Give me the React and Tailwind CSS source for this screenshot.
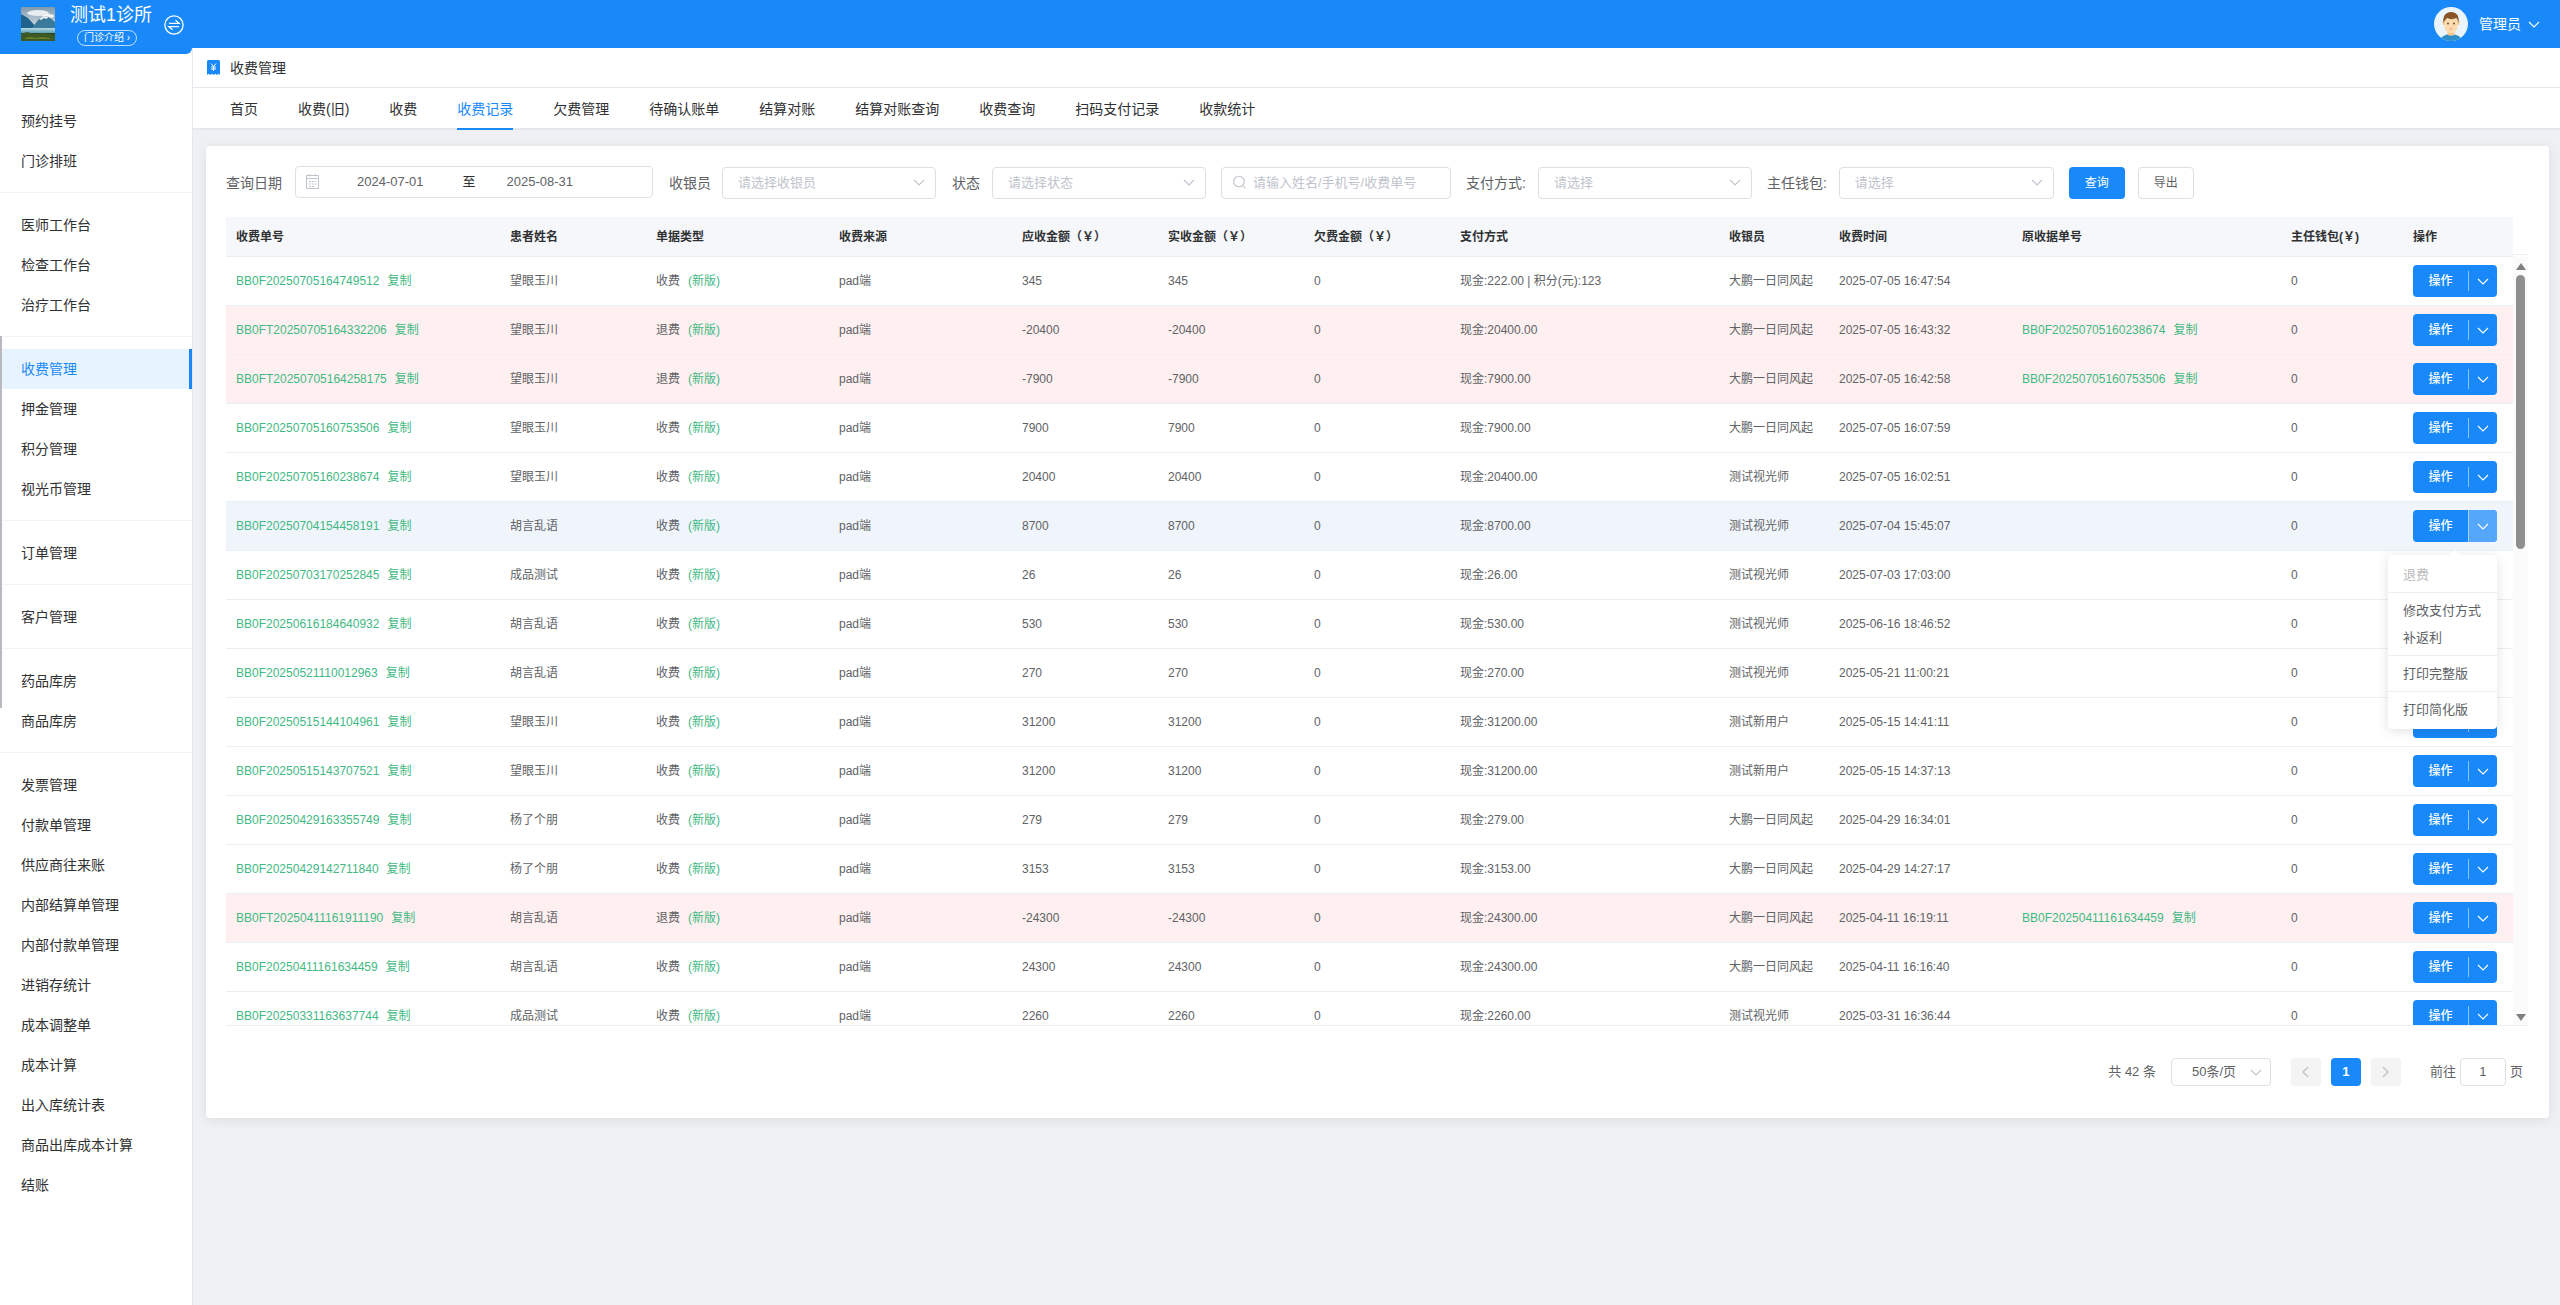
const FONT = "font-['Liberation_Sans','Noto_Sans_CJK_SC',sans-serif]";

const navSections = [
  ['首页', '预约挂号', '门诊排班'],
  ['医师工作台', '检查工作台', '治疗工作台'],
  ['收费管理', '押金管理', '积分管理', '视光币管理'],
  ['订单管理'],
  ['客户管理'],
  ['药品库房', '商品库房'],
  ['发票管理', '付款单管理', '供应商往来账', '内部结算单管理', '内部付款单管理', '进销存统计', '成本调整单', '成本计算', '出入库统计表', '商品出库成本计算', '结账'],
];

const tabs = ['首页', '收费(旧)', '收费', '收费记录', '欠费管理', '待确认账单', '结算对账', '结算对账查询', '收费查询', '扫码支付记录', '收款统计'];

const headers = ['收费单号', '患者姓名', '单据类型', '收费来源', '应收金额（￥）', '实收金额（￥）', '欠费金额（￥）', '支付方式', '收银员', '收费时间', '原收据单号', '主任钱包(￥)', '操作'];

const DP = '大鹏一日同风起';
const SG = '测试视光师';
const XY = '测试新用户';
const WY = '望眼玉川';
const HY = '胡言乱语';
const CP = '成品测试';
const YL = '杨了个朋';

const rows = [
  { id: 'BB0F20250705164749512', name: WY, type: '收费', amount: '345', pay: '现金:222.00 | 积分(元):123', cashier: DP, time: '2025-07-05 16:47:54' },
  { id: 'BB0FT20250705164332206', name: WY, type: '退费', amount: '-20400', pay: '现金:20400.00', cashier: DP, time: '2025-07-05 16:43:32', orig: 'BB0F20250705160238674' },
  { id: 'BB0FT20250705164258175', name: WY, type: '退费', amount: '-7900', pay: '现金:7900.00', cashier: DP, time: '2025-07-05 16:42:58', orig: 'BB0F20250705160753506' },
  { id: 'BB0F20250705160753506', name: WY, type: '收费', amount: '7900', pay: '现金:7900.00', cashier: DP, time: '2025-07-05 16:07:59' },
  { id: 'BB0F20250705160238674', name: WY, type: '收费', amount: '20400', pay: '现金:20400.00', cashier: SG, time: '2025-07-05 16:02:51' },
  { id: 'BB0F20250704154458191', name: HY, type: '收费', amount: '8700', pay: '现金:8700.00', cashier: SG, time: '2025-07-04 15:45:07', open: true },
  { id: 'BB0F20250703170252845', name: CP, type: '收费', amount: '26', pay: '现金:26.00', cashier: SG, time: '2025-07-03 17:03:00' },
  { id: 'BB0F20250616184640932', name: HY, type: '收费', amount: '530', pay: '现金:530.00', cashier: SG, time: '2025-06-16 18:46:52' },
  { id: 'BB0F20250521110012963', name: HY, type: '收费', amount: '270', pay: '现金:270.00', cashier: SG, time: '2025-05-21 11:00:21' },
  { id: 'BB0F20250515144104961', name: WY, type: '收费', amount: '31200', pay: '现金:31200.00', cashier: XY, time: '2025-05-15 14:41:11' },
  { id: 'BB0F20250515143707521', name: WY, type: '收费', amount: '31200', pay: '现金:31200.00', cashier: XY, time: '2025-05-15 14:37:13' },
  { id: 'BB0F20250429163355749', name: YL, type: '收费', amount: '279', pay: '现金:279.00', cashier: DP, time: '2025-04-29 16:34:01' },
  { id: 'BB0F20250429142711840', name: YL, type: '收费', amount: '3153', pay: '现金:3153.00', cashier: DP, time: '2025-04-29 14:27:17' },
  { id: 'BB0FT20250411161911190', name: HY, type: '退费', amount: '-24300', pay: '现金:24300.00', cashier: DP, time: '2025-04-11 16:19:11', orig: 'BB0F20250411161634459' },
  { id: 'BB0F20250411161634459', name: HY, type: '收费', amount: '24300', pay: '现金:24300.00', cashier: DP, time: '2025-04-11 16:16:40' },
  { id: 'BB0F20250331163637744', name: CP, type: '收费', amount: '2260', pay: '现金:2260.00', cashier: SG, time: '2025-03-31 16:36:44' },
];

const GRID = 'grid grid-cols-[274px_146px_183px_183px_146px_146px_146px_269px_110px_183px_269px_122px_110px]';

function Chevron({ className = 'text-[#c0c4cc]' }) {
  return (
    <svg width="12" height="7" viewBox="0 0 12 7" fill="none" className={className}>
      <path d="M1 1l5 5 5-5" stroke="currentColor" strokeWidth="1.1" />
    </svg>
  );
}

function Logo() {
  return (
    <svg width="34" height="34" viewBox="0 0 34 34" className="shrink-0">
      <defs>
        <linearGradient id="sky" x1="0" y1="0" x2="0" y2="1">
          <stop offset="0" stopColor="#7f99ad" />
          <stop offset="1" stopColor="#d5dfe5" />
        </linearGradient>
        <linearGradient id="lake" x1="0" y1="0" x2="0" y2="1">
          <stop offset="0" stopColor="#b5dce5" />
          <stop offset="1" stopColor="#4b93a8" />
        </linearGradient>
      </defs>
      <rect width="34" height="21" fill="url(#sky)" />
      <ellipse cx="17" cy="6" rx="11" ry="3" fill="#e6ecef" />
      <ellipse cx="27" cy="9" rx="6" ry="2" fill="#f2f5f6" />
      <path d="M0 7l7 4 10 11H0z" fill="#1f628c" />
      <path d="M10 22l8-10 5-3 5 1 6 5v7z" fill="#3a7a9c" />
      <path d="M18 12l5-3 5 1-3 2-2-1-3 2z" fill="#eef2f5" />
      <rect y="21" width="34" height="6" fill="url(#lake)" />
      <rect y="26" width="34" height="8" fill="#2d4a22" />
      <path d="M0 27l6-2 7 2 8-1 13 2v6H0z" fill="#3c5a26" />
      <path d="M4 31l5-1 6 1 6-1 8 1v1H4z" fill="#6c7f2c" />
    </svg>
  );
}

function Avatar() {
  return (
    <svg width="34" height="34" viewBox="0 0 34 34" className="shrink-0">
      <clipPath id="avatarClip"><circle cx="17" cy="17" r="17" /></clipPath>
      <g clipPath="url(#avatarClip)">
        <rect width="34" height="34" fill="#eaf5fb" />
        <path d="M6 34c1-5 6-7 11-7s10 2 11 7z" fill="#2f8fc9" />
        <path d="M13.5 23h7v4.5c-1 1.6-6 1.6-7 0z" fill="#f6c88f" />
        <ellipse cx="9.8" cy="16" rx="1.4" ry="2.2" fill="#f6c88f" />
        <ellipse cx="24.2" cy="16" rx="1.4" ry="2.2" fill="#f6c88f" />
        <path d="M10.5 12h13v7c0 4-3 7-6.500 7s-6.500-3-6.500-7z" fill="#fcdcae" />
        <path d="M9.500 16c-1-6 1.500-11 7.500-11 6.500 0 8.500 5 7.500 11-.6-2-1-3.500-2-5-3 1.500-7 1.500-9.500 0-1.500 1.500-2.500 3-3.500 5z" fill="#8a5424" />
        <circle cx="14" cy="16.500" r=".9" fill="#5a3a1c" />
        <circle cx="20" cy="16.500" r=".9" fill="#5a3a1c" />
        <path d="M15.500 22h3" stroke="#d98e6a" strokeWidth=".8" />
      </g>
    </svg>
  );
}

function SwitchIcon() {
  return (
    <svg width="20" height="20" viewBox="0 0 20 20" fill="none" stroke="#fff" className="shrink-0">
      <circle cx="10" cy="10" r="9.100" strokeWidth="1.300" />
      <path d="M5 8.300h10L11.500 5.300" strokeWidth="1.300" />
      <path d="M15 11.700H5l3.500 3" strokeWidth="1.300" />
    </svg>
  );
}

function ReceiptIcon() {
  return (
    <svg width="13" height="15" viewBox="0 0 13 15" className="shrink-0">
      <path d="M1.500 0h10A1.500 1.500 0 0113 1.500V15l-1.600-1.200L9.800 15l-1.600-1.200L6.500 15l-1.700-1.200L3.200 15l-1.600-1.200L0 15V1.500A1.500 1.500 0 011.500 0z" fill="#1989fa" />
      <path d="M4 3.500l2.500 3 2.500-3M6.500 6.500v4.500M4 7h5M4 9h5" stroke="#fff" strokeWidth="1" fill="none" />
    </svg>
  );
}

function CalendarIcon() {
  return (
    <svg width="13" height="15" viewBox="0 0 13 15" fill="none" stroke="#c0c4cc" className="shrink-0">
      <rect x=".5" y="1.500" width="12" height="13" />
      <path d="M.5 4.500h12M3.500 0v2.500M9.500 0v2.500" />
      <path d="M3 7.500h2M6 7.500h2M9 7.500h1.500M3 10h2M6 10h2M9 10h1.500M3 12.500h2M6 12.500h2" strokeWidth="1" />
    </svg>
  );
}

function SearchIcon() {
  return (
    <svg width="13" height="15" viewBox="0 0 13 15" fill="none" stroke="#c0c4cc" strokeWidth="1.100" className="shrink-0">
      <circle cx="6" cy="6.500" r="5.300" />
      <path d="M10 10.500l2.500 3" />
    </svg>
  );
}

function Triangle({ up }) {
  return (
    <svg width="10" height="7" viewBox="0 0 10 7" className="shrink-0">
      <path d={up ? 'M5 0l5 7H0z' : 'M5 7L0 0h10z'} fill="#808080" />
    </svg>
  );
}

function Select({ placeholder, width = 'w-[214px]' }) {
  return (
    <div className={`flex h-8 items-center justify-between rounded border border-[#dcdfe6] bg-white pl-[15px] pr-[10px] text-[13px] text-[#c0c4cc] ${width}`}>
      <span>{placeholder}</span>
      <Chevron />
    </div>
  );
}

function Label({ children }) {
  return <span className="whitespace-nowrap text-sm text-[#606266]">{children}</span>;
}

function DropItem({ children, disabled }) {
  return (
    <div className={`flex h-[27px] items-center pl-[15px] text-[13px] ${disabled ? 'text-[#bbbbbb]' : 'text-[#606266]'}`}>{children}</div>
  );
}

function Dropdown() {
  return (
    <div className="absolute left-[-25px] top-[45px] z-20 w-[109px] rounded bg-white py-[6px] font-normal shadow-[0_2px_12px_rgba(0,0,0,0.12)]">
      <div className="absolute left-[63px] top-[-4px] h-2 w-2 rotate-45 bg-white" />
      <DropItem disabled>退费</DropItem>
      <div className="my-1 h-px bg-[#ebeef5]" />
      <DropItem>修改支付方式</DropItem>
      <DropItem>补返利</DropItem>
      <div className="my-1 h-px bg-[#ebeef5]" />
      <DropItem>打印完整版</DropItem>
      <div className="my-1 h-px bg-[#ebeef5]" />
      <DropItem>打印简化版</DropItem>
    </div>
  );
}

function ActionButton({ open }) {
  return (
    <div className="relative flex h-8 w-[84px] items-stretch overflow-visible rounded bg-[#1989fa] text-xs font-medium text-white">
      <span className="flex w-[55px] items-center justify-center">操作</span>
      {open ? (
        <>
          <span className="w-px bg-[#a3d0fd]" />
          <span className="flex flex-1 items-center justify-center rounded-r bg-[#55a7fb]"><Chevron className="text-white" /></span>
          <Dropdown />
        </>
      ) : (
        <>
          <span className="my-[6px] w-px bg-[#8cc4fc]" />
          <span className="flex flex-1 items-center justify-center"><Chevron className="text-white" /></span>
        </>
      )}
    </div>
  );
}

function CodeCell({ code }) {
  return (
    <span className="text-[#42b983]">
      {code}
      <span className="ml-2">复制</span>
    </span>
  );
}

function Row({ row, nextPink }) {
  const pink = row.type === '退费';
  const bg = row.open ? 'bg-[#f0f5fb]' : pink ? 'bg-[#fef0f0]' : 'bg-white';
  const border = pink && nextPink ? 'border-[#f8ecee]' : 'border-[#ebeef5]';
  const cell = 'pl-[10px] whitespace-nowrap';
  return (
    <div className={`${GRID} h-[49px] shrink-0 items-center border-b text-xs text-[#606266] ${bg} ${border}`}>
      <div className={cell}><CodeCell code={row.id} /></div>
      <div className={cell}>{row.name}</div>
      <div className={cell}>
        {row.type}
        <span className="ml-2 text-[#42b983]">(新版)</span>
      </div>
      <div className={cell}>pad端</div>
      <div className={cell}>{row.amount}</div>
      <div className={cell}>{row.amount}</div>
      <div className={cell}>0</div>
      <div className={cell}>{row.pay}</div>
      <div className={cell}>{row.cashier}</div>
      <div className={cell}>{row.time}</div>
      <div className={cell}>{row.orig ? <CodeCell code={row.orig} /> : null}</div>
      <div className={cell}>0</div>
      <div className={cell}><ActionButton open={row.open} /></div>
    </div>
  );
}

export default function App() {
  return (
    <div className={`flex h-screen w-full min-w-[2560px] flex-col overflow-hidden bg-[#eff0f4] ${FONT}`}>
      <header className="flex h-12 shrink-0 items-start bg-[#1989fa] text-white">
        <div className="ml-[21px] mt-[7px]"><Logo /></div>
        <div className="ml-[15px] flex flex-col items-start">
          <div className="h-[30px] whitespace-nowrap text-lg leading-[30px]">测试1诊所</div>
          <div className="ml-[7px] flex h-4 w-[60px] items-center justify-center rounded-full border border-white/70 text-[10px] leading-none">门诊介绍 ›</div>
        </div>
        <div className="ml-3 mt-[15px]"><SwitchIcon /></div>
        <div className="ml-auto mr-5 flex h-12 items-center">
          <Avatar />
          <span className="ml-[11px] text-sm">管理员</span>
          <Chevron className="ml-[7px] text-white" />
        </div>
      </header>

      <div className="flex min-h-0 flex-1">
        <aside className="relative flex w-[193px] shrink-0 flex-col border-r border-[#e4e7ed] bg-white">
          <div className="h-[6px] shrink-0 rounded-br-[10px] bg-[#1989fa]" />
          <div className="absolute left-0 top-[288px] z-10 h-[372px] w-[2px] bg-[#b9b9bf]" />
          <nav>
            {navSections.map((section, i) => (
              <div key={i} className={`${i === 0 ? 'pt-[7px]' : 'pt-3'} ${i < navSections.length - 1 ? 'border-b border-[#f2f3f5] pb-[11px]' : ''}`}>
                {section.map((item) => (
                  item === '收费管理' ? (
                    <div key={item} className="flex h-10 items-center border-r-[3px] border-[#1989fa] bg-[#e8f4fd] pb-px pl-[21px] text-sm text-[#1989fa]">{item}</div>
                  ) : (
                    <div key={item} className="flex h-10 items-center pb-px pl-[21px] text-sm text-[#303133]">{item}</div>
                  )
                ))}
              </div>
            ))}
          </nav>
        </aside>

        <main className="flex min-w-0 flex-1 flex-col">
          <div className="flex h-10 shrink-0 items-center border-b border-[#e4e7ed] bg-white pl-[14px]">
            <ReceiptIcon />
            <span className="ml-[10px] text-sm text-[#303133]">收费管理</span>
          </div>
          <nav className="flex h-[42px] shrink-0 items-start gap-10 border-b-2 border-[#e4e7ed] bg-white pl-[37px]">
            {tabs.map((t) => (
              <div key={t} className={`flex h-[42px] items-center whitespace-nowrap border-b-2 pt-0.5 text-sm ${t === '收费记录' ? 'border-[#1989fa] text-[#1989fa]' : 'border-transparent text-[#303133]'}`}>{t}</div>
            ))}
          </nav>

          <section className="ml-[13px] mr-[11px] mt-4 h-[972px] rounded bg-white pl-5 pt-5 shadow-[0_2px_12px_rgba(0,0,0,0.08)]">
            <div className="flex h-[33px] items-center">
              <div className="flex items-center gap-[13px]">
                <Label>查询日期</Label>
                <div className="flex h-8 w-[358px] -translate-y-px items-center rounded border border-[#dcdfe6] pl-[10px] text-[13px] text-[#606266]">
                  <CalendarIcon />
                  <span className="ml-[38px]">2024-07-01</span>
                  <span className="ml-[39px] text-[#303133]">至</span>
                  <span className="ml-[31px]">2025-08-31</span>
                </div>
              </div>
              <div className="ml-4 flex items-center gap-[11px]">
                <Label>收银员</Label>
                <Select placeholder="请选择收银员" />
              </div>
              <div className="ml-4 flex items-center gap-3">
                <Label>状态</Label>
                <Select placeholder="请选择状态" />
              </div>
              <div className="ml-[15px] flex h-8 w-[230px] items-center rounded border border-[#dcdfe6] pl-[11px] text-[13px] text-[#c0c4cc]">
                <SearchIcon />
                <span className="ml-[7px] whitespace-nowrap">请输入姓名/手机号/收费单号</span>
              </div>
              <div className="ml-[15px] flex items-center gap-3">
                <Label>支付方式:</Label>
                <Select placeholder="请选择" />
              </div>
              <div className="ml-[15px] flex items-center gap-3">
                <Label>主任钱包:</Label>
                <Select placeholder="请选择" width="w-[215px]" />
              </div>
              <button className="ml-[15px] h-8 w-14 rounded bg-[#1989fa] text-xs text-white">查询</button>
              <button className="ml-[13px] h-8 w-14 rounded border border-[#dcdfe6] bg-white text-xs text-[#606266]">导出</button>
            </div>

            <div className="mt-[18px] w-[2302px]">
              <div className="flex h-10">
                <div className={`${GRID} h-10 w-[2287px] items-center border-b border-[#ebeef5] bg-[#f5f7fa] text-xs font-bold text-[#303133]`}>
                  {headers.map((h) => (
                    <div key={h} className="whitespace-nowrap pl-[10px]">{h}</div>
                  ))}
                </div>
                <div className="mb-[2px] w-[15px] border-b border-[#ebeef5]" />
              </div>
              <div className="flex h-[769px] border-b border-[#ebeef5]">
                <div className="flex w-[2287px] flex-col overflow-hidden">
                  {rows.map((r, i) => (
                    <Row key={r.id} row={r} nextPink={rows[i + 1]?.type === '退费'} />
                  ))}
                </div>
                <div className="flex w-[15px] flex-col items-center bg-[#fbfbfb] pb-[4px] pt-[6px]">
                  <Triangle up />
                  <div className="mt-[5px] h-[274px] w-[9px] rounded-full bg-[#8f8f8f]" />
                  <div className="flex-1" />
                  <Triangle />
                </div>
              </div>
            </div>

            <div className="mt-8 flex h-7 items-center justify-end pr-[26px] text-[13px] text-[#606266]">
              <span>共 42 条</span>
              <div className="ml-[15px] flex h-7 w-[100px] items-center justify-between rounded border border-[#dcdfe6] pl-5 pr-[8px]">
                <span>50条/页</span>
                <Chevron />
              </div>
              <div className="ml-5 flex h-7 w-[30px] items-center justify-center rounded-sm bg-[#f4f4f5]">
                <svg width="7" height="12" viewBox="0 0 7 12" fill="none" stroke="#c0c4cc" strokeWidth="1.500"><path d="M6 1L1 6l5 5" /></svg>
              </div>
              <div className="ml-[10px] flex h-7 w-[30px] items-center justify-center rounded-sm bg-[#1989fa] font-bold text-white">1</div>
              <div className="ml-[10px] flex h-7 w-[30px] items-center justify-center rounded-sm bg-[#f4f4f5]">
                <svg width="7" height="12" viewBox="0 0 7 12" fill="none" stroke="#c0c4cc" strokeWidth="1.500"><path d="M1 1l5 5-5 5" /></svg>
              </div>
              <span className="ml-[29px]">前往</span>
              <div className="ml-1 flex h-7 w-[46px] items-center justify-center rounded border border-[#dcdfe6]">1</div>
              <span className="ml-1">页</span>
            </div>
          </section>
        </main>
      </div>
    </div>
  );
}
